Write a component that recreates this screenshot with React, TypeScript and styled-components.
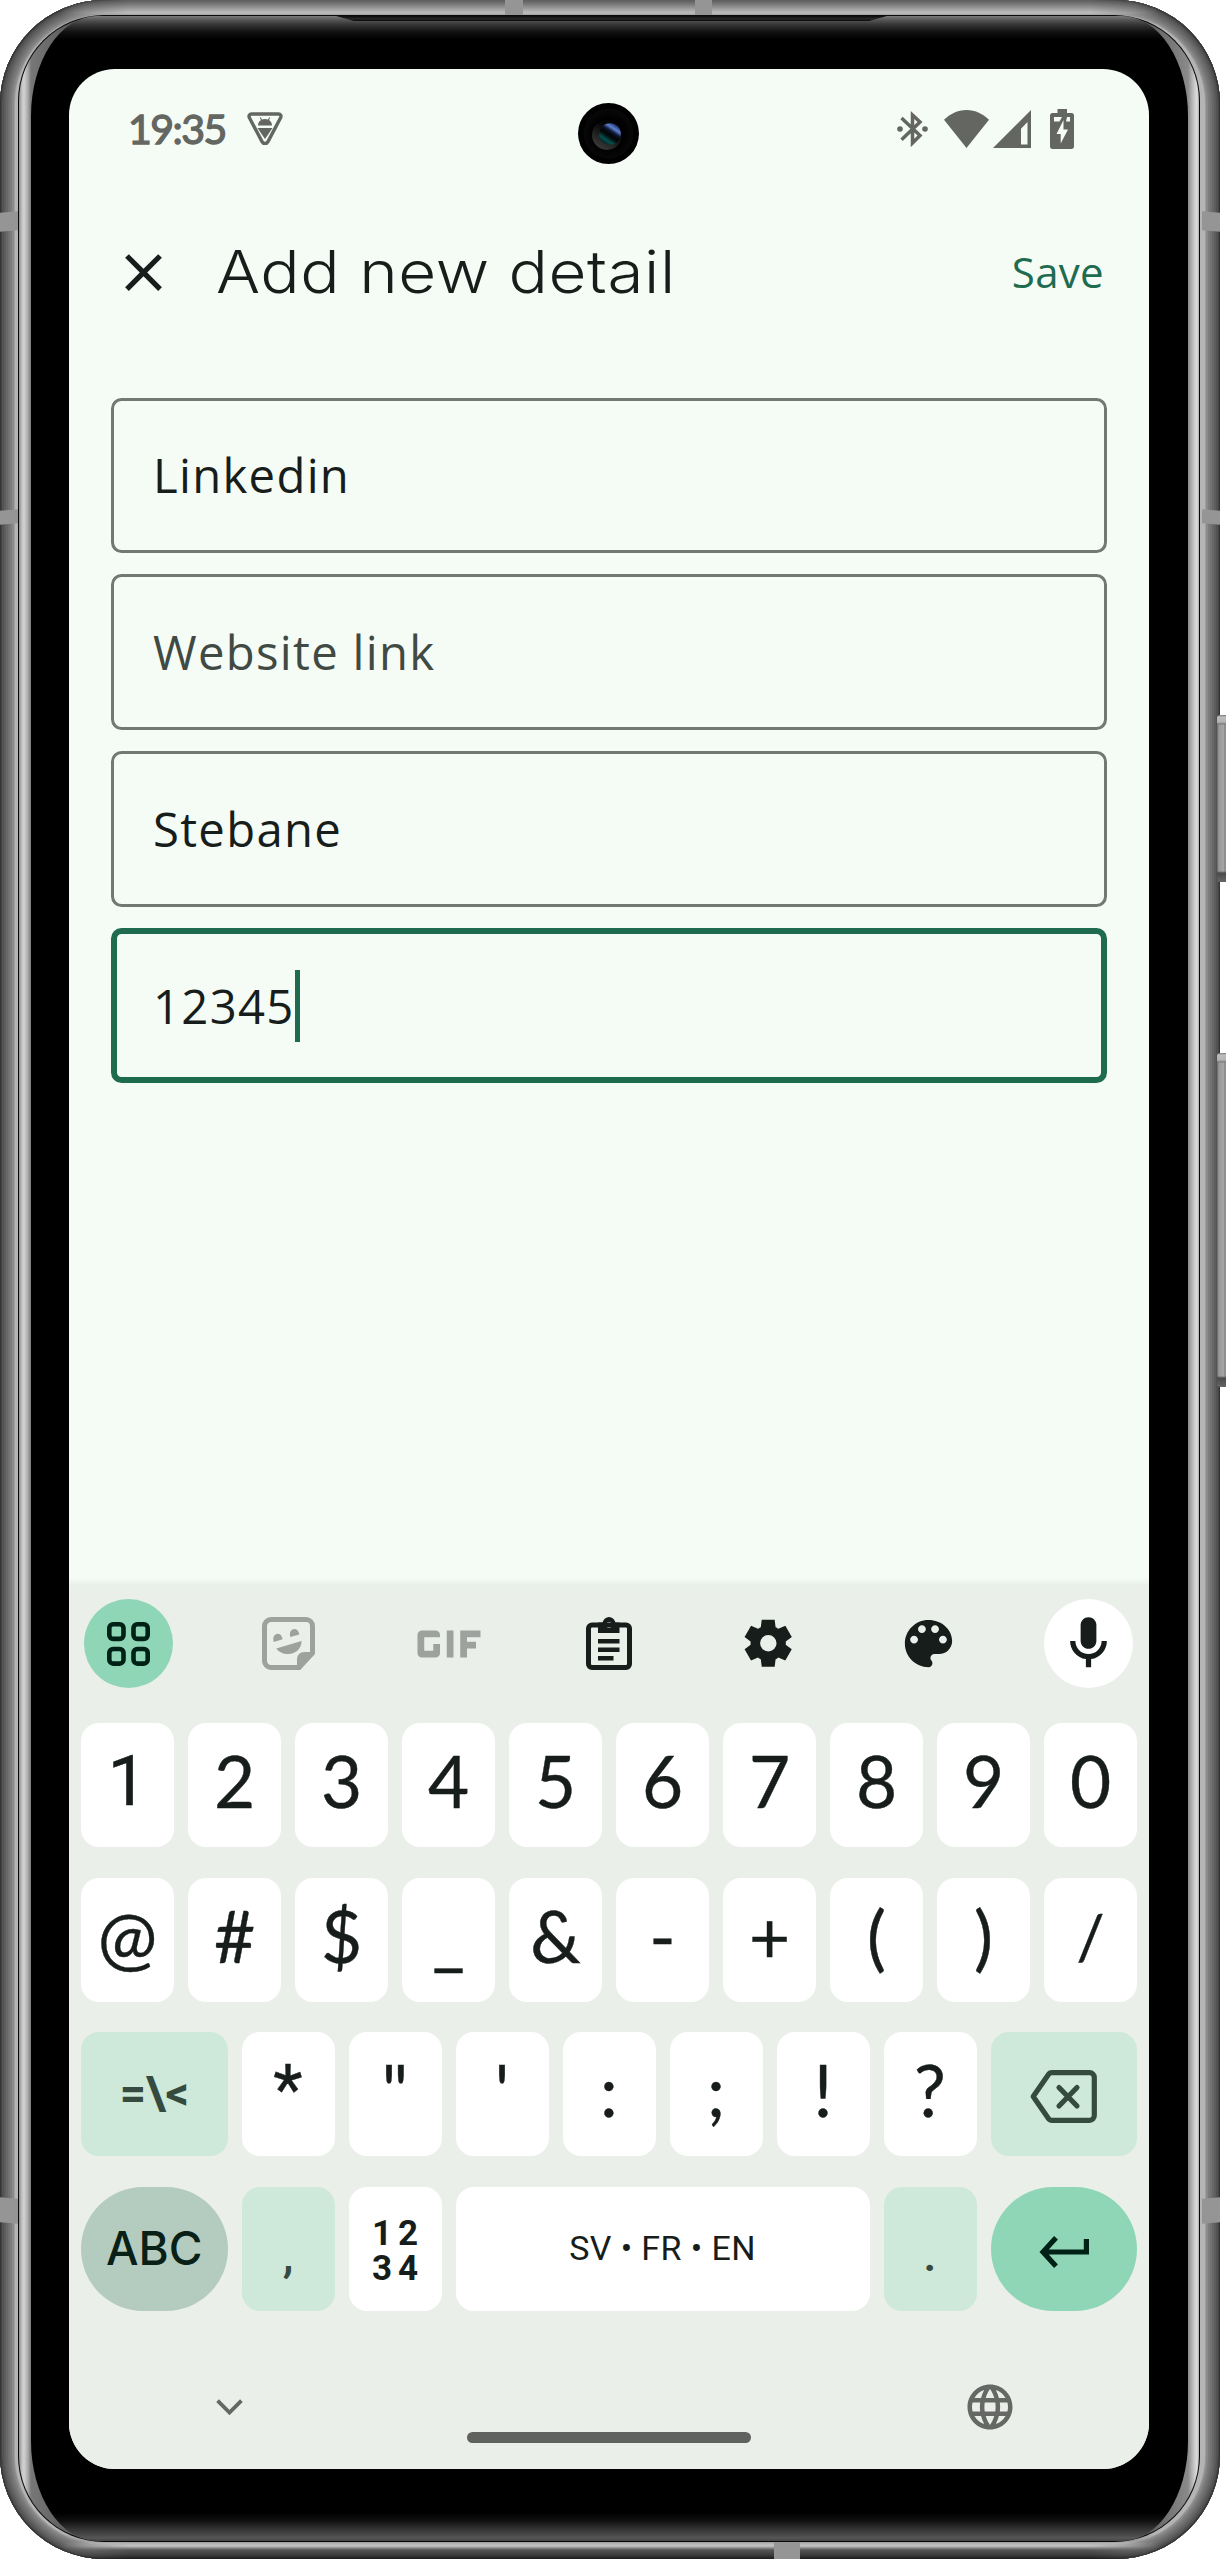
import React from "react";
import styled, { createGlobalStyle } from "styled-components";
import { MdGif, MdLanguage } from "react-icons/md";

const GlobalStyle = createGlobalStyle`
  body { margin: 0; background: #ffffff; }
  *, *::before, *::after { box-sizing: border-box; }
  svg { display: block; }
`;

const ink = "#171d1a";
const green = "#1f6b50";
const statusInk = "#636661";
const funcInk = "#364b40";

/* ---------- device ---------- */

const Stage = styled.main`
  position: relative;
  width: 1226px;
  height: 2559px;
  overflow: hidden;
  background: #fff;
`;

const SideButton = styled.div<{ $top: number; $height: number }>`
  position: absolute;
  right: 0;
  top: ${(p) => p.$top}px;
  width: 9px;
  height: ${(p) => p.$height}px;
  border-radius: 3px 0 0 3px;
  background: linear-gradient(180deg, #7a7a7a 0, #bdbdbd 2px, #b4b4b4 7px, #7a7a7a 9px, rgba(0, 0, 0, 0) 10px, rgba(0, 0, 0, 0) calc(100% - 11px), #4a4a4a calc(100% - 9px), #666 100%),
    linear-gradient(90deg, #666 0, #999 2px, #a6a6a6 7px, #777 8px, #aaa 100%);
`;

const Body = styled.div`
  position: relative;
  width: 1219.5px;
  height: 2559px;
  padding: 15px 20px 17px 18px;
  border-radius: 104px;
  overflow: hidden;
  background: #b4b4b4;
  box-shadow:
    inset 0 0 0 1px #343434,
    inset 0 0 0 2px #444,
    inset 0 0 0 4px #525252,
    inset 0 0 0 6px #5e5e5e,
    inset 0 0 0 8px #686868,
    inset 0 0 0 10px #727272,
    inset 0 0 0 12px #7c7c7c,
    inset 0 0 0 14px #8a8a8a,
    inset 0 0 0 15px #a0a0a0;
`;

const TopRail = styled.div`
  position: absolute;
  left: 0;
  right: 0;
  top: 0;
  height: 24px;
  background: linear-gradient(180deg, #5c5c5c 0, #777 4px, #a8a8a8 10px, #bdbdbd 13px, #a0a0a0 15px, #777 100%);
  mask-image: linear-gradient(90deg, transparent 60px, #000 130px, #000 1090px, transparent 1160px);
`;

const BottomRail = styled.div`
  position: absolute;
  left: 0;
  right: 0;
  bottom: 0;
  height: 24px;
  background: linear-gradient(0deg, #1c1c1c 0, #3c3c3c 4px, #555 9px, #8a8a8a 11px, #c4c4c4 13px, #b0b0b0 16px, #777 18px);
  mask-image: linear-gradient(90deg, transparent 60px, #000 130px, #000 1090px, transparent 1160px);
`;

const Antenna = styled.div<{ $x: number; $y: number; $w: number; $h: number; $skew?: number }>`
  position: absolute;
  left: ${(p) => p.$x}px;
  top: ${(p) => p.$y}px;
  width: ${(p) => p.$w}px;
  height: ${(p) => p.$h}px;
  background: #959595;
  transform: skewY(${(p) => p.$skew ?? 0}deg);
`;

const Seam = styled.div`
  position: relative;
  height: 100%;
  padding: 1px;
  border-radius: 86px;
  background: #0a0a0a;
`;

const Glass = styled.div`
  height: 100%;
  padding: 0 10.5px 0 12px;
  border-radius: 85px;
  background: linear-gradient(90deg, #8c8c8c 0, #c4c4c4 3px, #d2d2d2 5px, #a9a9a9 9px, #777 12px, #555 60px, #555 calc(100% - 60px), #8a8a8a calc(100% - 11px), #bdbdbd calc(100% - 6px), #dedede calc(100% - 2px), #aaa 100%);
`;

const Panel = styled.div`
  position: relative;
  height: 100%;
  padding: 53px 39px 72px 38px;
  border-radius: 66px / 100px;
  background: linear-gradient(180deg, #7c7c7c 0, #555 4px, #333 9px, #111 16px, #000 24px, #000 calc(100% - 28px), #111 calc(100% - 20px), #333 calc(100% - 12px), #565656 calc(100% - 3px), #444 100%);
`;

const Speaker = styled.div`
  position: absolute;
  top: 0;
  left: 305px;
  width: 551px;
  height: 5px;
  background: linear-gradient(180deg, #0c0c0c, #2a2a2a 3px, #050505);
  clip-path: polygon(0 0, 100% 0, calc(100% - 18px) 100%, 18px 100%);
`;

const Screen = styled.div`
  position: relative;
  display: flex;
  flex-direction: column;
  width: 1080px;
  height: 2400px;
  border-radius: 46px;
  overflow: hidden;
  background: #f5fcf6;
  color: ${ink};
`;

const Camera = styled.div`
  position: absolute;
  left: 509px;
  top: 34px;
  width: 61px;
  height: 61px;
  border-radius: 50%;
  background: #000;
  display: grid;
  place-items: center;
`;

/* ---------- status bar ---------- */

const StatusBar = styled.header`
  display: flex;
  justify-content: space-between;
  align-items: center;
  height: 119px;
  padding: 0 75px 0 59px;
  color: ${statusInk};
`;

const StatusGroup = styled.div`
  display: flex;
  align-items: center;
`;

const StatusIcons = styled.div`
  display: grid;
  grid-template-columns: 47px 49px 57px 24px;
  align-items: center;
`;

const Clock = styled.span`
  font: 400 41px/1 Lato, sans-serif;
  -webkit-text-stroke: 1.3px currentColor;
  letter-spacing: -1.5px;
  width: 119px;
  white-space: nowrap;
`;

/* ---------- app bar ---------- */

const AppBar = styled.div`
  display: flex;
  align-items: center;
  height: 168px;
  padding: 0 45px 0 43px;
`;

const IconButton = styled.button<{ $pad?: string }>`
  border: 0;
  padding: ${(p) => p.$pad ?? "0"};
  background: none;
  color: inherit;
  display: flex;
`;

const Title = styled.h1`
  margin: 0 0 0 41px;
  flex: 1;
  font: 300 59px/80px Inter, sans-serif;
  letter-spacing: 0.5px;
  white-space: nowrap;
  transform: scaleX(1.11);
  transform-origin: left center;
`;

const SaveButton = styled.button`
  border: 0;
  padding: 0;
  background: none;
  color: ${green};
  font: 400 42px/60px "Open Sans", sans-serif;
  letter-spacing: 0.3px;
`;

/* ---------- form ---------- */

const Form = styled.section`
  display: flex;
  flex-direction: column;
  gap: 21.2px;
  flex: 1;
  padding: 41.5px 42px 0;
`;

const Field = styled.div<{ $focused?: boolean; $placeholder?: boolean }>`
  display: flex;
  align-items: center;
  height: 155.6px;
  padding-left: ${(p) => (p.$focused ? 36 : 39)}px;
  border: ${(p) => (p.$focused ? `6px solid ${green}` : "3px solid #707974")};
  border-radius: 10.5px;
  color: ${(p) => (p.$placeholder ? "#414943" : ink)};
  font: 400 47.25px/64px "Open Sans", sans-serif;
  letter-spacing: 1.3px;
`;

const Caret = styled.i`
  width: 5px;
  height: 72px;
  background: ${green};
`;

/* ---------- keyboard ---------- */

const Keyboard = styled.section`
  position: relative;
  display: flex;
  flex-direction: column;
  height: 883px;
  background: #eaefe9;

  &::before {
    content: "";
    position: absolute;
    left: 0;
    right: 0;
    top: -8px;
    height: 8px;
    background: linear-gradient(180deg, rgba(234, 239, 233, 0), #e8eee8);
  }
`;

const Toolbar = styled.div`
  display: flex;
  justify-content: space-between;
  align-items: center;
  height: 115px;
  margin-bottom: 22px;
  padding: 0 16px 0 15px;
`;

const Tool = styled.button<{ $bg?: string; $color?: string }>`
  display: flex;
  align-items: center;
  justify-content: center;
  width: 89px;
  height: 89px;
  border: 0;
  padding: 0;
  border-radius: 50%;
  background: ${(p) => p.$bg ?? "transparent"};
  color: ${(p) => p.$color ?? ink};

  svg {
    flex: none;
  }
`;

const Keys = styled.div`
  display: flex;
  flex-direction: column;
  gap: 30.7px;
  padding: 0 12px;
`;

const KeyRow = styled.div`
  display: flex;
  gap: 14px;
  height: 124px;
`;

type KeyKind = "plain" | "func" | "mode" | "enter";
const keyBg: Record<KeyKind, string> = { plain: "#ffffff", func: "#cee9da", mode: "#b4ccbf", enter: "#8fd6b6" };
const keyInk: Record<KeyKind, string> = { plain: ink, func: funcInk, mode: "#092017", enter: "#002116" };

const Key = styled.button<{ $kind?: KeyKind; $w?: number; $grow?: boolean; $drop?: number }>`
  display: flex;
  align-items: center;
  justify-content: center;
  width: ${(p) => p.$w ?? 93}px;
  ${(p) => (p.$grow ? "flex: 1;" : "")}
  height: 124px;
  padding: ${(p) => p.$drop ?? 0}px 0 0;
  border: 0;
  border-radius: ${(p) => (p.$kind === "mode" || p.$kind === "enter" ? 62 : 18)}px;
  background: ${(p) => keyBg[p.$kind ?? "plain"]};
  color: ${(p) => keyInk[p.$kind ?? "plain"]};
`;

const Glyph = styled.span<{ $font?: string; $size?: number }>`
  font: 400 ${(p) => p.$size ?? 71}px/80px ${(p) => p.$font ?? "Lato"}, sans-serif;
  -webkit-text-stroke: 0.4px currentColor;
  padding-bottom: 8px;
`;

const Label = styled.span<{ $size: number; $weight?: number; $spacing?: number; $font?: string }>`
  font: ${(p) => p.$weight ?? 400} ${(p) => p.$size}px/1.17 ${(p) => p.$font ?? "Roboto"}, sans-serif;
  letter-spacing: ${(p) => p.$spacing ?? 0}px;
  white-space: pre;
`;

const NumPad = styled.span`
  display: grid;
  grid-template-columns: 26px 26px;
  font: 700 35px/35px Roboto, sans-serif;
  text-align: center;
`;

const Punct = styled.span`
  align-self: flex-end;
  font: 500 48px/56px Roboto, sans-serif;
  padding-bottom: 28px;
`;

const NavBar = styled.nav`
  display: grid;
  grid-template-columns: 1fr 284px 1fr;
  flex: 1;
  padding-top: 69px;
  color: #666866;
`;

const NavLeft = styled.div`
  padding-left: 134px;
`;
const NavRight = styled.div`
  display: flex;
  justify-content: flex-end;
  padding-right: 132.5px;
`;
const Handle = styled.div`
  height: 11px;
  margin-top: 52px;
  border-radius: 6px;
  background: #5f625e;
`;

/* ---------- icons ---------- */

const DebugIcon = () => (
  <svg width="36" height="34" viewBox="0 0 36 34" fill="currentColor">
    <path d="M4.500 2h27c2 0 3 1.800 2.200 3.600L21 29.600c-1.300 2.400-4.700 2.400-6 0L2.300 5.600C1.500 3.800 2.500 2 4.500 2z" fill="none" stroke="currentColor" strokeWidth="3.400" />
    <path d="M11 13.500c0-2.400 1.200-4.300 3-5.400l-1.300-2.300.9-.5L15 7.600c1.900-.7 4.100-.7 6 0l1.400-2.300.9.5L22 8.100c1.800 1.100 3 3 3 5.400z" />
    <path d="M10.500 16h15L18 27z" />
  </svg>
);

const BluetoothIcon = () => (
  <svg width="31" height="36" viewBox="0 0 31 36">
    <path d="M4.500 7l18.500 17.500L15.500 32V4L23 11 4.500 28.800" fill="none" stroke="currentColor" strokeWidth="3.500" />
    <circle cx="3" cy="18" r="2.800" fill="currentColor" />
    <circle cx="28" cy="18" r="2.800" fill="currentColor" />
  </svg>
);

const WifiIcon = () => (
  <svg width="45" height="38" viewBox="0 0 45 38">
    <path d="M22.500 38L0 9.800C6 4 13.500 0 22.500 0S39 4 45 9.800z" fill="currentColor" />
  </svg>
);

const SignalIcon = () => (
  <svg width="38" height="38" viewBox="0 0 38 38">
    <path fillRule="evenodd" d="M38 0v38H0zM34.500 12l-6.500 6.800V34.500h6.500z" fill="currentColor" />
  </svg>
);

const BatteryIcon = () => (
  <svg width="24" height="40" viewBox="0 0 24 40">
    <path fillRule="evenodd" d="M7.500 0h9.500v4h4.500c1.400 0 2.500 1.100 2.500 2.500v31c0 1.400-1.100 2.500-2.500 2.500h-19C1.100 40 0 38.900 0 37.500v-31C0 5.100 1.100 4 2.500 4h5zM4 8v4.500h5.500L12 8zM17 8l-1 4.500h4V8zM13.500 11L6.500 25h4.200v9.500L18 20.500h-4.500z" fill="currentColor" />
  </svg>
);

const CloseIcon = () => (
  <svg width="63" height="63" viewBox="0 0 24 24" fill="currentColor">
    <path d="M19 6.410L17.590 5 12 10.590 6.410 5 5 6.410 10.590 12 5 17.590 6.410 19 12 13.410 17.590 19 19 17.590 13.410 12z" />
  </svg>
);

const CameraLens = () => (
  <svg width="61" height="61" viewBox="0 0 61 61">
    <defs>
      <radialGradient id="rim" cx="0.5" cy="0.5" r="0.5">
        <stop offset="0.6" stopColor="#000" />
        <stop offset="1" stopColor="#080808" />
      </radialGradient>
      <linearGradient id="ring" x1="0.8" y1="0.1" x2="0.3" y2="0.9">
        <stop offset="0.3" stopColor="#050505" />
        <stop offset="1" stopColor="#363636" />
      </linearGradient>
      <linearGradient id="lens" x1="0.78" y1="0.08" x2="0.22" y2="0.92">
        <stop offset="0" stopColor="#1c2f70" />
        <stop offset="0.2" stopColor="#5f82cf" />
        <stop offset="0.36" stopColor="#0e1738" />
        <stop offset="0.5" stopColor="#020606" />
        <stop offset="0.62" stopColor="#020a0a" />
        <stop offset="0.82" stopColor="#06504f" />
        <stop offset="1" stopColor="#032625" />
      </linearGradient>
    </defs>
    <circle cx="30.500" cy="30.500" r="25" fill="url(#rim)" />
    <circle cx="29" cy="32" r="15" fill="url(#ring)" />
    <circle cx="32" cy="31" r="10.800" fill="url(#lens)" />
  </svg>
);

const GridIcon = () => (
  <svg width="43" height="44" viewBox="0 0 43 44" fill="none" stroke="currentColor" strokeWidth="4.600">
    <rect x="2.300" y="2.300" width="14.200" height="14.600" rx="3.800" />
    <rect x="26.500" y="2.300" width="14.200" height="14.600" rx="3.800" />
    <rect x="2.300" y="27" width="14.200" height="14.600" rx="3.800" />
    <rect x="26.500" y="27" width="14.200" height="14.600" rx="3.800" />
  </svg>
);

const StickerIcon = () => (
  <svg width="53" height="53" viewBox="0 0 53 53" fill="currentColor">
    <path d="M9 2.500h35c3.600 0 6.500 2.900 6.500 6.500v27L37 50.500H9c-3.600 0-6.500-2.900-6.500-6.500V9c0-3.600 2.900-6.500 6.500-6.500z" fill="none" stroke="currentColor" strokeWidth="5" />
    <path d="M35 51V42.500c0-4.400 3-7.500 7.500-7.500H52v2L38 53z" />
    <path d="M11.800 25c-1.600-4.500.5-8 4-8.200 2.300 0 4 1.700 4.800 5.500z" />
    <path d="M28.300 20c-1.400-4.500.7-7.700 4-7.900 2.500 0 4.300 1.700 5 5.300z" />
    <path d="M14.300 31.500L39.500 24c.3 7-5.500 13-13.500 13-5 0-9.500-2-11.700-5.500z" />
  </svg>
);

const ClipboardIcon = () => (
  <svg width="46" height="53" viewBox="0 0 46 53" fill="currentColor">
    <rect x="2.500" y="8" width="41" height="42.500" rx="3.500" fill="none" stroke="currentColor" strokeWidth="5" />
    <path fillRule="evenodd" d="M12 5.500h4.500C17.500 2.200 20 0 23 0s5.500 2.200 6.500 5.500H33.500V16H12zM23 5a3 3 0 1 0 0 6 3 3 0 0 0 0-6z" />
    <path d="M12 22h21.500v4.500H12zM12 30.500h21.500V35H12zM12 39h15.500v4.500H12z" />
  </svg>
);

const GearIcon = () => (
  <svg width="56.400" height="56.400" viewBox="0 -960 960 960" fill="currentColor">
    <path d="m370-80-16-128q-13-5-24.500-12T307-235l-119 50L78-375l103-78q-1-7-1-13.500v-27q0-6.500 1-13.500L78-585l110-190 119 50q11-8 23-15t24-12l16-128h220l16 128q13 5 24.500 12t22.500 15l119-50 110 190-103 78q1 7 1 13.500v27q0 6.500-2 13.500l103 78-110 190-118-50q-11 8-23 15t-24 12L590-80H370Zm112-260q58 0 99-41t41-99q0-58-41-99t-99-41q-59 0-99.500 41T342-480q0 58 40.500 99t99.500 41Z" />
  </svg>
);

const PaletteIcon = () => (
  <svg width="63" height="63" viewBox="0 0 24 24" fill="currentColor">
    <path d="M12 3c-4.970 0-9 4.030-9 9s4.030 9 9 9c.83 0 1.500-.67 1.500-1.500 0-.39-.15-.74-.39-1.010-.23-.26-.38-.61-.38-.99 0-.83.67-1.500 1.500-1.500H16c2.760 0 5-2.240 5-5 0-4.420-4.030-8-9-8zm-5.500 9c-.83 0-1.500-.67-1.500-1.500S5.670 9 6.500 9 8 9.670 8 10.500 7.330 12 6.500 12zm3-4C8.670 8 8 7.330 8 6.500S8.670 5 9.500 5s1.500.67 1.500 1.500S10.330 8 9.500 8zm5 0c-.83 0-1.500-.67-1.500-1.500S13.670 5 14.500 5s1.500.67 1.500 1.500S15.330 8 14.500 8zm3 4c-.83 0-1.500-.67-1.500-1.500S16.670 9 17.500 9s1.500.67 1.500 1.500-.67 1.500-1.500 1.500z" />
  </svg>
);

const MicIcon = () => (
  <svg width="63" height="63" viewBox="0 0 24 24" fill="currentColor">
    <path d="M12 14c1.660 0 3-1.340 3-3V5c0-1.660-1.340-3-3-3S9 3.340 9 5v6c0 1.660 1.340 3 3 3z" />
    <path d="M17 11c0 2.760-2.240 5-5 5s-5-2.240-5-5H5c0 3.530 2.610 6.430 6 6.920V21h2v-3.080c3.390-.49 6-3.390 6-6.920h-2z" />
  </svg>
);

const BackspaceIcon = () => (
  <svg width="67" height="53" viewBox="0 0 67 53" fill="none" stroke="currentColor" strokeWidth="5.200" strokeLinecap="round" strokeLinejoin="round">
    <path d="M22 2.700h37.500c2.700 0 4.800 2.100 4.800 4.800v38c0 2.700-2.100 4.800-4.800 4.800H22c-1.600 0-3-.8-3.900-2.200L3.200 26.500 18.100 4.900C19 3.500 20.400 2.700 22 2.700z" />
    <path d="M29 17.500l18 18.500M47 17.500L29 36" />
  </svg>
);

const EnterIcon = () => (
  <svg width="50" height="32" viewBox="0 0 50 32" fill="none" stroke="currentColor" strokeWidth="5.200">
    <path d="M17 1.800L4 16l13 14.200M4.500 16h42.900V3" />
  </svg>
);

const ChevronIcon = () => (
  <svg width="27" height="17" viewBox="0 0 27 17" fill="none" stroke="currentColor" strokeWidth="3.800">
    <path d="M1.600 1.600L13.500 13.600 25.400 1.600" />
  </svg>
);

/* ---------- data ---------- */

const digitRow = ["1", "2", "3", "4", "5", "6", "7", "8", "9", "0"];
const symbolRow = ["@", "#", "$", "_", "&", "-", "+", "(", ")", "/"];
const punctRow = ["*", '"', "'", ":", ";", "!", "?"];

const glyphFont: Record<string, string> = { "1": "Roboto", "*": "Roboto" };
const glyphSize: Record<string, number> = { "/": 62, "*": 68 };

const fields = [
  { text: "Linkedin" },
  { text: "Website link", placeholder: true },
  { text: "Stebane" },
  { text: "12345", focused: true },
];

const renderKeys = (list: string[]) =>
  list.map((c) => (
    <Key key={c}>
      <Glyph $font={glyphFont[c]} $size={glyphSize[c]}>{c}</Glyph>
    </Key>
  ));

export default function App() {
  return (
    <Stage>
      <GlobalStyle />
      <Body>
        <TopRail />
        <BottomRail />
        <Antenna $x={505} $y={0} $w={18} $h={16} />
        <Antenna $x={695} $y={0} $w={17} $h={16} />
        <Antenna $x={774} $y={2542} $w={26} $h={17} />
        <Antenna $x={0} $y={212} $w={18} $h={19} $skew={-5} />
        <Antenna $x={0} $y={510} $w={18} $h={14} $skew={-5} />
        <Antenna $x={0} $y={2198} $w={18} $h={25} $skew={5} />
        <Antenna $x={1202} $y={212} $w={18} $h={19} $skew={5} />
        <Antenna $x={1202} $y={510} $w={18} $h={14} $skew={5} />
        <Antenna $x={1202} $y={2198} $w={18} $h={25} $skew={-5} />
        <Seam>
          <Glass>
            <Panel>
              <Speaker />
              <Screen>
                <StatusBar>
                  <StatusGroup>
                    <Clock>19:35</Clock>
                    <DebugIcon />
                  </StatusGroup>
                  <StatusIcons>
                    <BluetoothIcon />
                    <WifiIcon />
                    <SignalIcon />
                    <BatteryIcon />
                  </StatusIcons>
                </StatusBar>
                <Camera>
                  <CameraLens />
                </Camera>

                <AppBar>
                  <IconButton aria-label="Close">
                    <CloseIcon />
                  </IconButton>
                  <Title>Add new detail</Title>
                  <SaveButton>Save</SaveButton>
                </AppBar>

                <Form>
                  {fields.map((f) => (
                    <Field key={f.text} $focused={f.focused} $placeholder={f.placeholder}>
                      {f.text}
                      {f.focused && <Caret />}
                    </Field>
                  ))}
                </Form>

                <Keyboard>
                  <Toolbar>
                    <Tool $bg="#8fd6b6" $color="#002116"><GridIcon /></Tool>
                    <Tool $color="#9da29e"><StickerIcon /></Tool>
                    <Tool $color="#9da29e"><MdGif size={108} /></Tool>
                    <Tool><ClipboardIcon /></Tool>
                    <Tool><GearIcon /></Tool>
                    <Tool><PaletteIcon /></Tool>
                    <Tool $bg="#ffffff"><MicIcon /></Tool>
                  </Toolbar>

                  <Keys>
                    <KeyRow>{renderKeys(digitRow)}</KeyRow>
                    <KeyRow>{renderKeys(symbolRow)}</KeyRow>
                    <KeyRow>
                      <Key $kind="func" $w={146.500}><Label $size={46} $weight={700}>{"=\\<"}</Label></Key>
                      {renderKeys(punctRow)}
                      <Key $kind="func" $w={146.500} $drop={4}><BackspaceIcon /></Key>
                    </KeyRow>
                    <KeyRow>
                      <Key $kind="mode" $w={146.500}><Label $size={46} $weight={500} $font="Inter">ABC</Label></Key>
                      <Key $kind="func"><Punct>,</Punct></Key>
                      <Key $drop={3}>
                        <NumPad>
                          <span>1</span>
                          <span>2</span>
                          <span>3</span>
                          <span>4</span>
                        </NumPad>
                      </Key>
                      <Key $grow><Label $size={34} $spacing={0.4}>SV • FR • EN</Label></Key>
                      <Key $kind="func"><Punct>.</Punct></Key>
                      <Key $kind="enter" $w={146.500} $drop={5}><EnterIcon /></Key>
                    </KeyRow>
                  </Keys>

                  <NavBar>
                    <NavLeft>
                      <IconButton aria-label="Hide keyboard" $pad="19px 13px">
                        <ChevronIcon />
                      </IconButton>
                    </NavLeft>
                    <Handle />
                    <NavRight>
                      <MdLanguage size={54} />
                    </NavRight>
                  </NavBar>
                </Keyboard>
              </Screen>
            </Panel>
          </Glass>
        </Seam>
      </Body>
      <SideButton $top={715} $height={167} />
      <SideButton $top={1053} $height={334} />
    </Stage>
  );
}
